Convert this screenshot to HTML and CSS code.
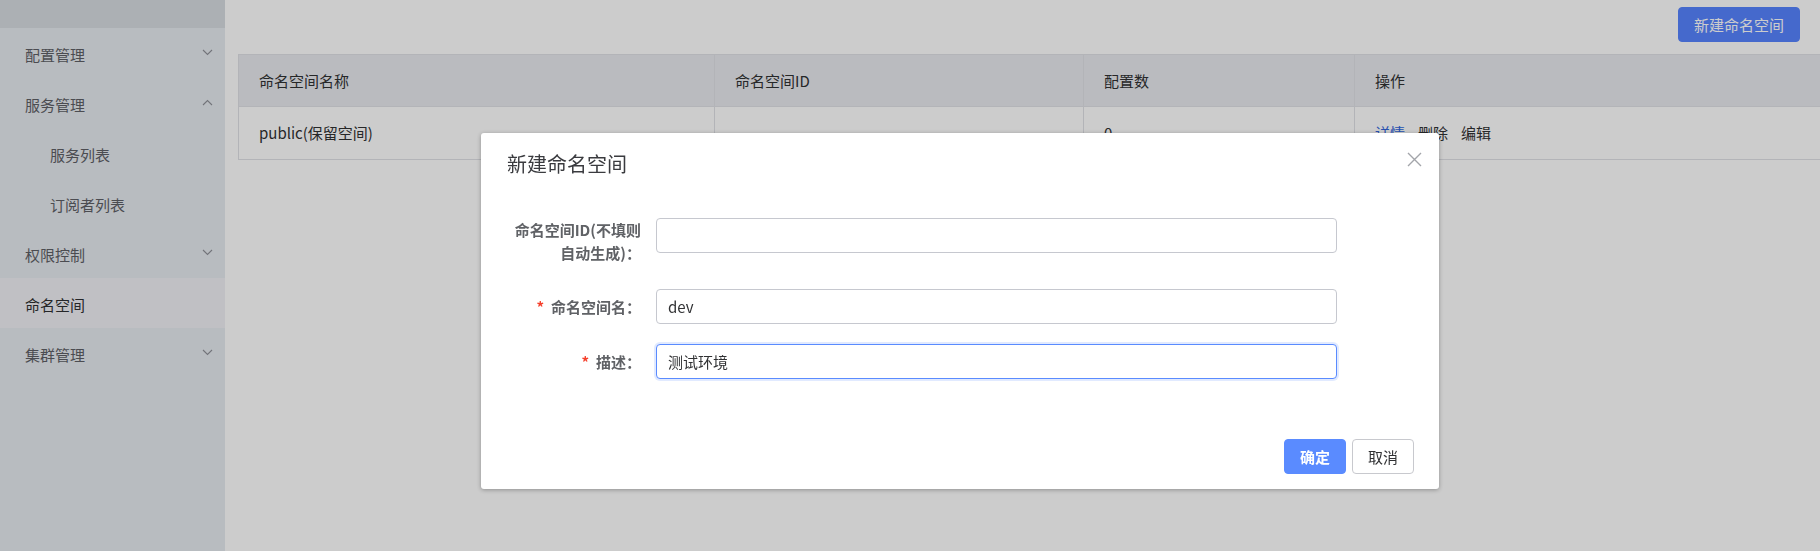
FILE: index.html
```html
<!DOCTYPE html>
<html lang="zh-CN">
<head>
<meta charset="utf-8">
<title>命名空间</title>
<link rel="stylesheet" href="styles.css">
</head>
<body>
<div class="layout">
  <aside class="sidebar">
    <div class="sidebar-top"></div>
    <ul class="menu">
      <li class="menu-item"><span>配置管理</span><svg class="arrow" width="11" height="7" viewBox="0 0 11 7"><path d="M1 1L5.5 5.5L10 1"/></svg></li>
      <li class="menu-item"><span>服务管理</span><svg class="arrow" width="11" height="7" viewBox="0 0 11 7"><path d="M1 6L5.5 1.5L10 6"/></svg></li>
      <li class="menu-item menu-item--sub"><span>服务列表</span></li>
      <li class="menu-item menu-item--sub"><span>订阅者列表</span></li>
      <li class="menu-item"><span>权限控制</span><svg class="arrow" width="11" height="7" viewBox="0 0 11 7"><path d="M1 1L5.5 5.5L10 1"/></svg></li>
      <li class="menu-item is-active"><span>命名空间</span></li>
      <li class="menu-item"><span>集群管理</span><svg class="arrow" width="11" height="7" viewBox="0 0 11 7"><path d="M1 1L5.5 5.5L10 1"/></svg></li>
    </ul>
  </aside>
  <main class="main">
    <div class="toolbar">
      <button class="btn btn-primary btn-create">新建命名空间</button>
    </div>
    <table class="table">
      <colgroup>
        <col class="col-1"><col class="col-2"><col class="col-3"><col class="col-4">
      </colgroup>
      <thead>
        <tr><th>命名空间名称</th><th>命名空间ID</th><th>配置数</th><th>操作</th></tr>
      </thead>
      <tbody>
        <tr>
          <td>public(保留空间)</td>
          <td></td>
          <td>0</td>
          <td><a class="link link--primary">详情</a><a class="link">删除</a><a class="link">编辑</a></td>
        </tr>
      </tbody>
    </table>
  </main>
</div>

<div class="mask"></div>

<div class="dialog">
  <div class="dialog-header">
    <span class="dialog-title">新建命名空间</span>
    <svg class="dialog-close" width="15" height="15" viewBox="0 0 15 15"><path d="M1 1L14 14M14 1L1 14"/></svg>
  </div>
  <div class="dialog-body">
    <div class="form-item form-item--tall">
      <label class="form-label form-label--top">命名空间ID(不填则自动生成)：</label>
      <input class="input" type="text" value="">
    </div>
    <div class="form-item">
      <label class="form-label"><span class="required">*</span>命名空间名：</label>
      <input class="input" type="text" value="dev">
    </div>
    <div class="form-item">
      <label class="form-label"><span class="required">*</span>描述：</label>
      <input class="input is-focus" type="text" value="测试环境">
    </div>
  </div>
  <div class="dialog-footer">
    <button class="btn btn-primary btn-ok">确定</button>
    <button class="btn btn-default">取消</button>
  </div>
</div>
</body>
</html>
```
FILE: styles.css
```css
* { box-sizing: border-box; }

html, body {
  margin: 0;
  padding: 0;
  width: 1820px;
  height: 551px;
  overflow: hidden;
  font-family: "Noto Sans CJK SC", "Noto Sans", sans-serif;
  font-size: 15px;
  color: #303133;
  background: #ffffff;
}

.layout {
  display: flex;
  height: 551px;
}

/* sidebar */
.sidebar {
  width: 225px;
  flex: none;
  background: #e7ebf0;
}
.sidebar-top {
  height: 28px;
  background: #d8dce2;
}
.menu {
  list-style: none;
  margin: 0;
  padding: 0;
}
.menu-item {
  height: 50px;
  display: flex;
  align-items: center;
  padding: 3px 12px 0 25px;
  color: #5e6066;
  font-size: 15px;
  line-height: 20px;
}
.menu-item--sub {
  padding-left: 50px;
}
.menu-item.is-active {
  background: #f1f0f5;
  color: #2f3033;
}
.arrow {
  margin-left: auto;
  margin-top: -5px;
  fill: none;
  stroke: #8f9299;
  stroke-width: 1.1;
}

/* main */
.main {
  flex: 1;
  min-width: 0;
  overflow: hidden;
  padding: 7px 20px 0 13px;
}
.toolbar {
  display: flex;
  justify-content: flex-end;
  margin-bottom: 12px;
}
.btn {
  font-family: inherit;
  font-size: 15px;
  height: 35px;
  border-radius: 4px;
  border: 1px solid transparent;
  padding: 0;
  line-height: 33px;
  cursor: pointer;
}
.btn-primary {
  background: #5784ff;
  border-color: #5784ff;
  color: #ffffff;
}
.btn-create {
  width: 122px;
}

.table {
  width: 1640px;
  border-collapse: collapse;
  table-layout: fixed;
}
.col-1 { width: 476px; }
.col-2 { width: 369px; }
.col-3 { width: 271px; }
.col-4 { width: 524px; }
.table th,
.table td {
  border: 1px solid #e0e1e6;
  text-align: left;
  padding: 0 20px;
  font-size: 15px;
  line-height: 20px;
  color: #303133;
}
.table th {
  height: 52px;
  font-weight: normal;
  background: #e9eaef;
}
.table td {
  height: 53px;
  background: #ffffff;
}
.link {
  margin-right: 13px;
  color: #303133;
}
.link--primary {
  color: #3166dc;
}

/* mask + dialog */
.mask {
  position: fixed;
  inset: 0;
  background: rgba(0, 0, 0, 0.2);
}
.dialog {
  position: absolute;
  left: 481px;
  top: 133px;
  width: 958px;
  background: #ffffff;
  border-radius: 3px;
  box-shadow: 0 1px 4px rgba(0, 0, 0, 0.3);
}
.dialog-header {
  position: relative;
  padding: 17px 26px 0 26px;
  height: 45px;
}
.dialog-title {
  font-size: 20px;
  line-height: 28px;
  color: #3a3b3f;
}
.dialog-close {
  position: absolute;
  top: 19px;
  right: 17px;
  fill: none;
  stroke: #a3a5aa;
  stroke-width: 1.4;
}
.dialog-body {
  padding: 40px 0 0 0;
}
.form-item {
  display: grid;
  grid-template-columns: 175px 681px;
  margin-bottom: 20px;
}
.form-item--tall {
  margin-bottom: 25px;
}
.form-label {
  text-align: right;
  padding-right: 15px;
  padding-left: 30px;
  font-weight: bold;
  color: #606266;
  font-size: 15px;
  line-height: 35px;
}
.form-label--top {
  line-height: 23px;
}
.required {
  color: #f5402c;
  margin-right: 7px;
}
.input {
  height: 35px;
  width: 100%;
  border: 1px solid #c6c8cf;
  border-radius: 4px;
  padding: 0 11px;
  font-family: inherit;
  font-size: 15px;
  color: #303133;
  outline: none;
  background: #ffffff;
}
.input.is-focus {
  border-color: #5a8bff;
  box-shadow: 0 0 0 2px rgba(90, 139, 255, 0.18);
}
.dialog-footer {
  display: flex;
  justify-content: flex-end;
  gap: 6px;
  padding: 40px 25px 15px 0;
}
.btn-ok {
  width: 62px;
  font-weight: bold;
  background: #5a8bff;
  border-color: #5a8bff;
}
.btn-default {
  width: 62px;
  background: #ffffff;
  border-color: #c8c9ce;
  color: #303133;
}
```
